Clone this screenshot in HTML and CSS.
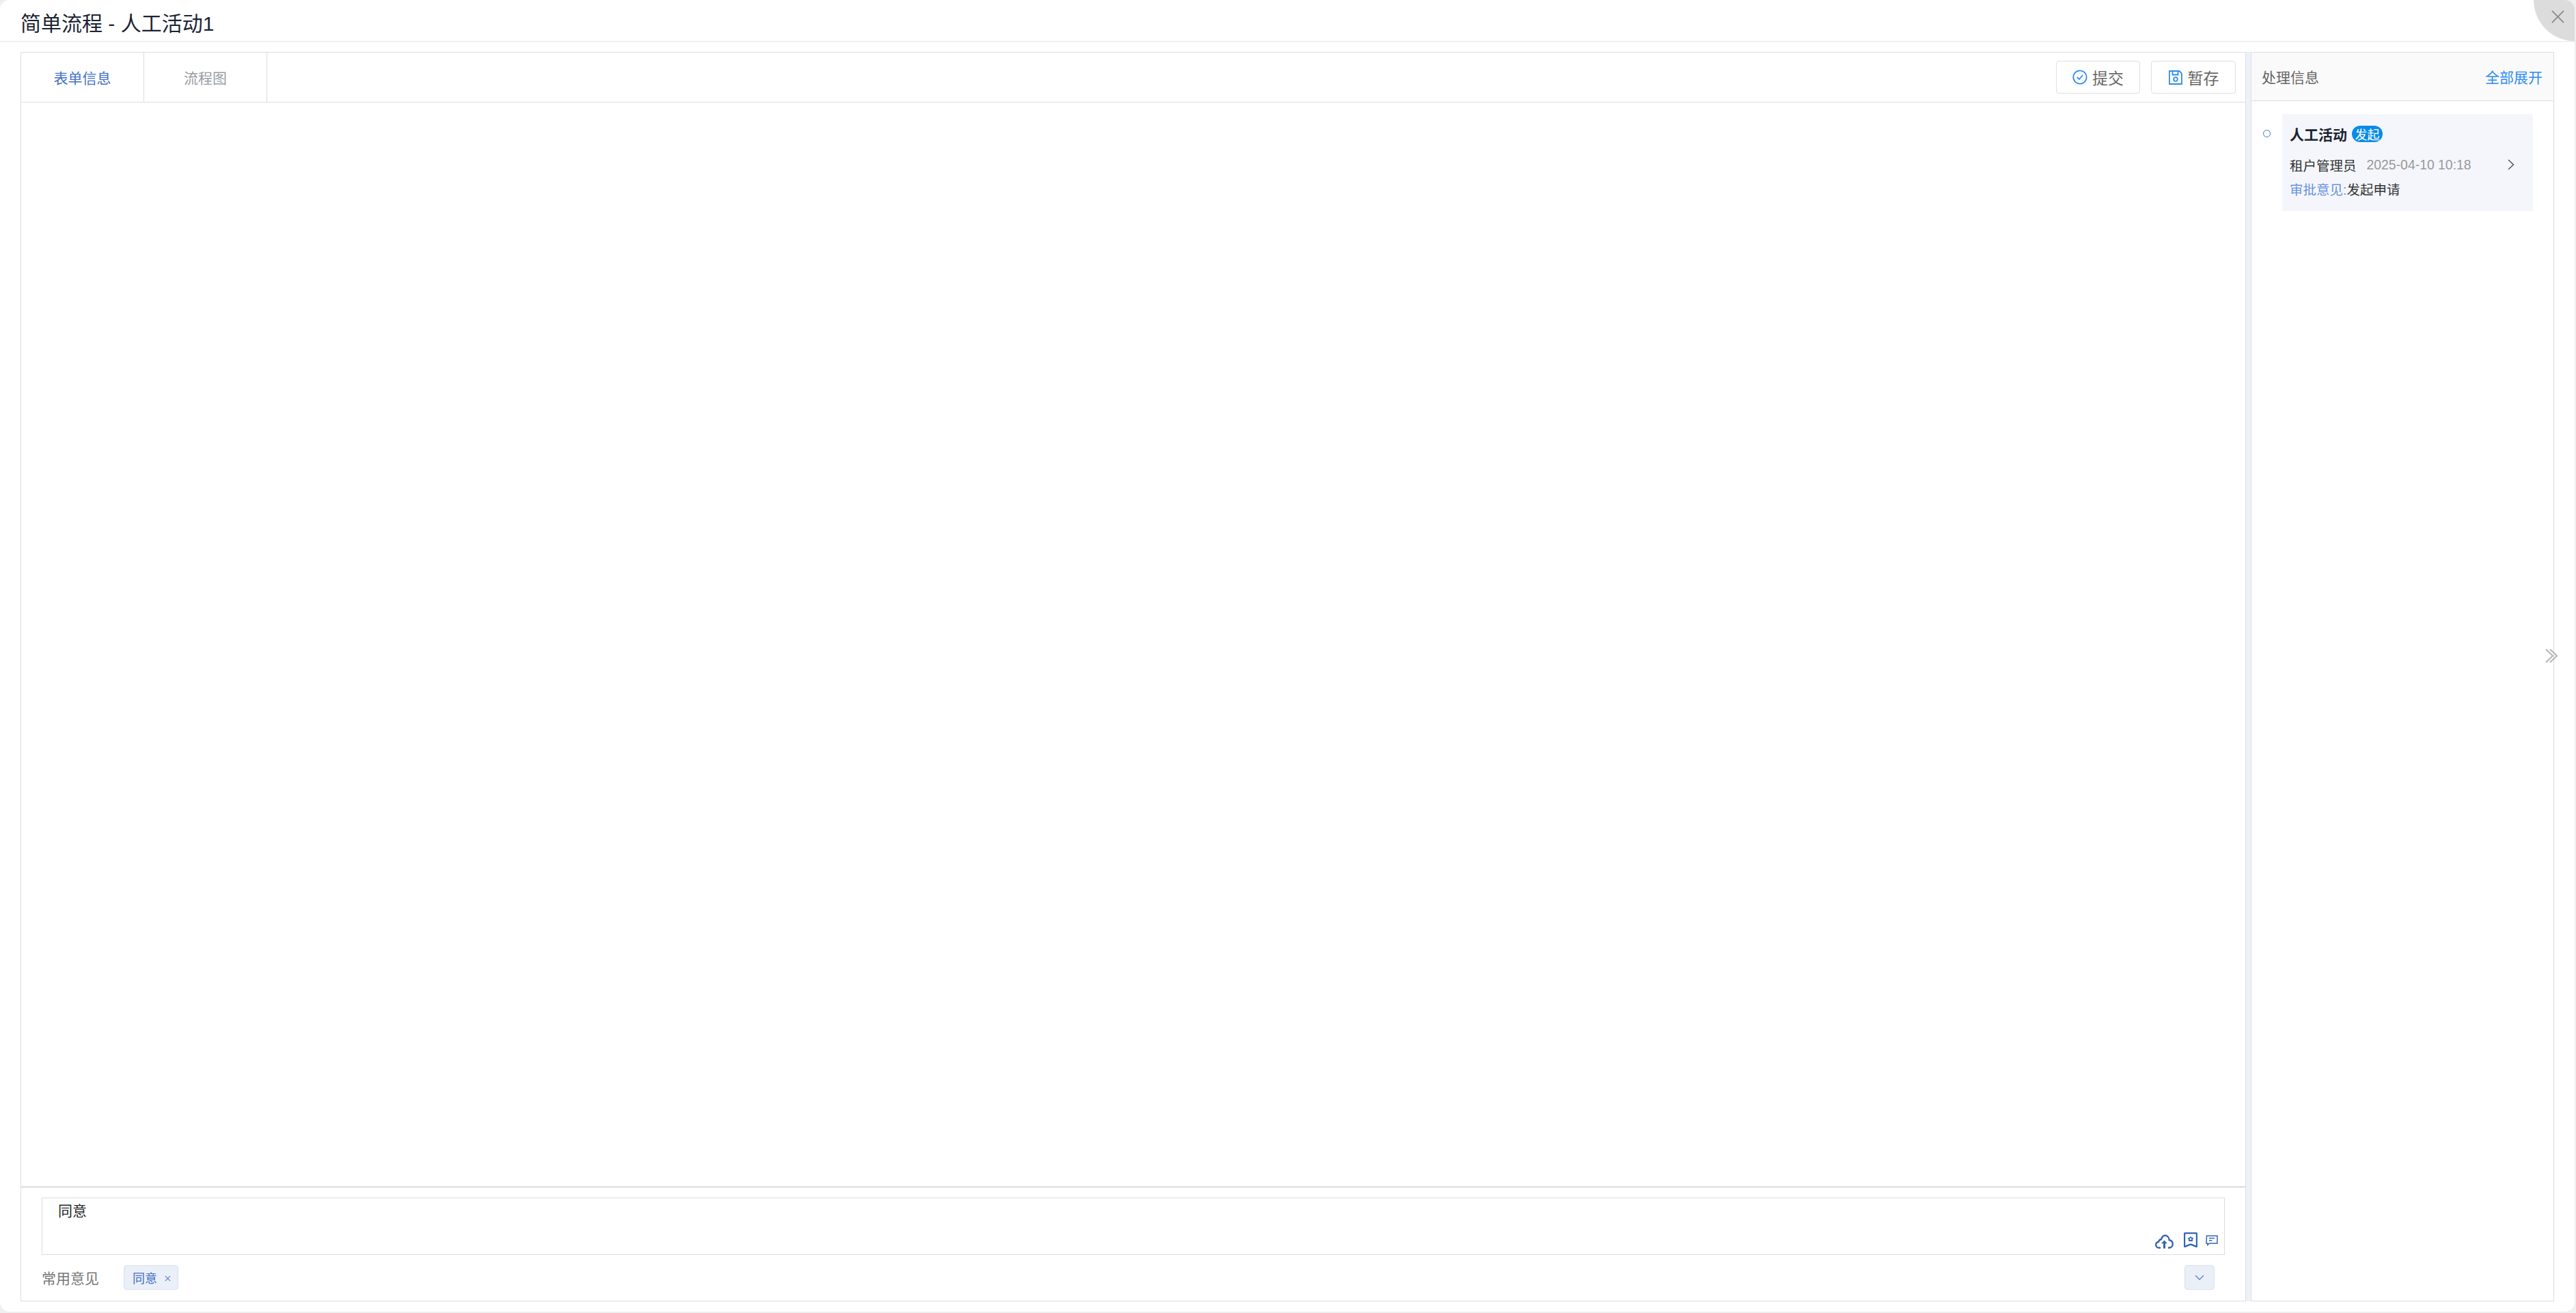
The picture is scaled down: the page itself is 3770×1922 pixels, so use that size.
FILE: index.html
```html
<!DOCTYPE html>
<html lang="zh-CN">
<head>
<meta charset="utf-8">
<title>简单流程 - 人工活动1</title>
<link rel="stylesheet" href="styles.css">
</head>
<body>
<div class="dialog">
  <header class="dialog-head"><h1 class="dialog-title">简单流程 - 人工活动1</h1></header>
  <button class="close" aria-label="关闭">
    <svg class="close-icon" viewBox="0 0 20 20"><path d="M1 1L19 19M19 1L1 19"/></svg>
  </button>
  <main class="frame">
    <section class="left">
      <div class="tabbar">
        <div class="tab tab-active">表单信息</div>
        <div class="tab">流程图</div>
        <div class="actions">
          <button class="btn btn-submit">
            <svg class="btn-icon" viewBox="0 0 22 22"><circle cx="11" cy="11" r="9.7"/><path d="M6.8 10.8L10 14L15.2 8"/></svg>提交
          </button>
          <button class="btn btn-save">
            <svg class="btn-icon" viewBox="0 0 20 22"><path d="M1 2H15.500L19 5.500V21H1Z"/><path d="M5.500 2V7.500H13.500V2"/><circle cx="10" cy="14" r="2.800"/></svg>暂存
          </button>
        </div>
      </div>
      <div class="form-body"></div>
      <div class="opinion">
        <div class="opinion-box">
          <div class="opinion-text">同意</div>
          <div class="opinion-icons">
            <svg class="ic-cloud" viewBox="0 0 27 21"><path d="M8 19.500H5.500C3 19.500 1.200 17.500 1.200 15.200C1.200 13 2.800 11.300 5 11C5.500 8.800 7 7.300 9 7.200C10 4 11.500 1.500 14.500 1.500C18 1.500 20.500 4.500 20.700 8.300C24 8.800 25.800 11.200 25.800 14.200C25.800 17.300 23.500 19.500 20.500 19.500H19"/><path class="fill" d="M13.500 8.500L18 13.300H15V20.500H12V13.300H9Z"/></svg>
            <svg class="ic-mark" viewBox="0 0 20 22"><path d="M2.500 1H17.500C18.300 1 19 1.700 19 2.500V20C19 20.800 18.300 21 17.700 20.700L12.500 18.300C11 17.700 9 17.700 7.500 18.300L2.300 20.700C1.700 21 1 20.800 1 20V2.500C1 1.700 1.700 1 2.500 1Z"/><path class="fill" d="M10 5.500L11.500 7.500L14.200 8.200L13 10.500L13 13H7L7 10.500L5.800 8.200L8.500 7.500Z"/><circle class="hole" cx="10" cy="9.800" r="1.400"/></svg>
            <svg class="ic-msg" viewBox="0 0 18 16"><path d="M1.500 1H17V12H5.500L2.800 14.500V12H1Z"/><path d="M5 4.500H13M5 8H9.500"/></svg>
          </div>
        </div>
        <div class="common">
          <span class="common-label">常用意见</span>
          <span class="tag">同意<svg class="tag-x" viewBox="0 0 10 10"><path d="M1 1L9 9M9 1L1 9"/></svg></span>
          <button class="more" aria-label="展开"><svg class="more-icon" viewBox="0 0 14 8"><path d="M1 1L7 7L13 1"/></svg></button>
        </div>
      </div>
    </section>
    <div class="gutter"></div>
    <aside class="right">
      <div class="right-head">
        <span class="right-title">处理信息</span>
        <a class="expand">全部展开</a>
      </div>
      <div class="timeline">
        <span class="dot"></span>
        <div class="card">
          <div class="card-title"><strong class="card-name">人工活动</strong><span class="badge">发起</span></div>
          <div class="card-meta">
            <span class="user">租户管理员</span><span class="date">2025-04-10 10:18</span>
            <svg class="chev" viewBox="0 0 10 16"><path d="M1 1L8.500 8L1 15"/></svg>
          </div>
          <div class="card-note"><span class="note-key">审批意见:</span>发起申请</div>
        </div>
      </div>
    </aside>
  </main>
  <svg class="side-toggle" viewBox="0 0 18 22"><path d="M1 1.500L11 11L1 20.500M7 1.500L17 11L7 20.500"/></svg>
</div>
</body>
</html>
```
FILE: styles.css
```css
* { box-sizing: border-box; }
html, body { margin: 0; height: 100%; background: #efefef; overflow: hidden; }
body { font-family: "Liberation Sans", "Noto Sans CJK SC", sans-serif; }
button { font-family: inherit; padding: 0; cursor: pointer; }

.dialog {
  position: relative;
  width: 3768px;
  height: 1920px;
  background: #fff;
  border-radius: 14px;
  overflow: hidden;
  display: flex;
  flex-direction: column;
}
.dialog-head {
  height: 61px;
  flex: none;
  padding-left: 30px;
  border-bottom: 1px solid #e4e4ea;
  display: flex;
  align-items: center;
}
.dialog-title { margin: 0; font-size: 30px; font-weight: 400; color: #1c2433; line-height: 40px; padding-top: 10px; }
.close {
  position: absolute;
  top: 0;
  right: 0;
  width: 60px;
  height: 60px;
  background: #dcdcdc;
  border: 0;
  border-bottom-left-radius: 60px;
}
.close-icon { position: absolute; left: 26px; top: 15px; width: 19px; height: 19px; fill: none; stroke: #8c8c8c; stroke-width: 2; }

.frame { flex: none; height: 1829px; margin: 15px 30px 0; display: flex; }
.left { width: 3257px; flex: none; display: flex; flex-direction: column; border: 1px solid #dcdce6; }
.tabbar { height: 73px; flex: none; display: flex; align-items: stretch; border-bottom: 1px solid #dcdce6; }
.tab {
  width: 180px;
  flex: none;
  border-right: 1px solid #dcdce6;
  display: flex;
  align-items: center;
  justify-content: center;
  font-size: 21px;
  color: #999ca3;
}
.tab-active { color: #4472c4; }
.actions { margin-left: auto; padding-right: 14px; display: flex; align-items: center; gap: 16px; }
.btn {
  height: 48px;
  background: #fff;
  border: 1px solid #dcdfe6;
  border-radius: 4px;
  color: #666;
  font-size: 23px;
  display: flex;
  align-items: center;
  justify-content: center;
}
.btn-submit { width: 123px; }
.btn-save { width: 124px; }
.btn-icon { width: 22px; height: 22px; margin-right: 7px; fill: none; stroke: #2d8cf0; stroke-width: 1.800; }

.form-body { flex: 1; border-bottom: 1px solid #bbb; }
.opinion { height: 166px; flex: none; padding: 15px 30px 0; }
.opinion-box { position: relative; height: 84px; border: 1px solid #dcdce6; padding: 4px 23px; }
.opinion-text { font-size: 21px; line-height: 30px; color: #262626; }
.opinion-icons { position: absolute; right: 9px; bottom: 9px; height: 24px; display: flex; align-items: flex-start; }
.opinion-icons svg { flex: none; fill: none; stroke: #3565b5; stroke-width: 2.400; }
.opinion-icons .fill { fill: #3565b5; stroke: none; }
.opinion-icons .hole { fill: #fff; stroke: none; }
.ic-cloud { width: 27px; height: 21px; margin-top: 4px; margin-right: 15px; }
.ic-mark { width: 20px; height: 22px; margin-top: 1px; margin-right: 12px; }
.opinion-icons .ic-msg { width: 18px; height: 16px; margin-top: 5px; stroke-width: 1.500; }

.common { height: 36px; margin-top: 15px; display: flex; align-items: center; padding-right: 15px; }
.common-label { width: 120px; flex: none; font-size: 21px; color: #777; }
.tag {
  height: 36px;
  width: 80px;
  background: #eaeff8;
  border: 1px solid #d9e2f1;
  border-radius: 4px;
  font-size: 18px;
  color: #4472c4;
  display: flex;
  align-items: center;
  padding-left: 12px;
}
.tag-x { width: 9px; height: 9px; margin-left: 11px; margin-top: 3px; fill: none; stroke: #5b82c9; stroke-width: 1.300; }
.more {
  margin-left: auto;
  width: 44px;
  height: 36px;
  background: #eaeff8;
  border: 1px solid #d9e2f1;
  border-radius: 4px;
  display: flex;
  align-items: center;
  justify-content: center;
}
.more-icon { width: 14px; height: 8px; fill: none; stroke: #5b82c9; stroke-width: 1.300; }

.gutter { width: 7px; flex: none; background: #eff1f8; }
.right { width: 444px; flex: none; border: 1px solid #dcdce6; }
.right-head {
  height: 71px;
  background: #fafafa;
  border-bottom: 1px solid #dcdce6;
  display: flex;
  align-items: center;
  justify-content: space-between;
  padding: 0 16px 0 15px;
  font-size: 21px;
}
.right-title { color: #666; }
.expand { color: #2d8cf0; }
.timeline { position: relative; padding: 19px 30px 0 45px; }
.dot {
  position: absolute;
  left: 17px;
  top: 42px;
  width: 11px;
  height: 11px;
  border: 1.500px solid #3a72c8;
  border-radius: 50%;
  background: #fff;
}
.card { height: 142px; background: #f4f6fb; padding: 17px 11px 0; width: 367px; }
.card-title { height: 24px; display: flex; align-items: center; }
.card-name { font-size: 21px; font-weight: 700; color: #1c2433; }
.badge {
  margin-left: 7px;
  width: 45px;
  height: 24px;
  border-radius: 12px;
  background: #0a8be8;
  color: #fff;
  font-size: 18px;
  display: flex;
  align-items: center;
  justify-content: center;
}
.card-meta { position: relative; margin-top: 18px; height: 30px; display: flex; align-items: center; font-size: 19.500px; }
.user { color: #333; }
.date { margin-left: 15px; color: #999; font-size: 19.400px; }
.chev { position: absolute; right: 16px; top: 7px; width: 10px; height: 16px; fill: none; stroke: #555; stroke-width: 1.500; }
.card-note { margin-top: 7px; height: 30px; line-height: 30px; font-size: 19.500px; color: #333; white-space: nowrap; }
.note-key { color: #6a93dc; }

.side-toggle { position: absolute; left: 3725px; top: 949px; width: 18px; height: 22px; fill: none; stroke: #b5b5b5; stroke-width: 2; }
```
